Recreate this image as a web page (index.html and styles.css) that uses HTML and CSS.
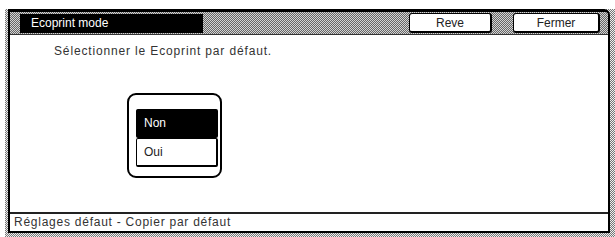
FILE: index.html
```html
<!DOCTYPE html>
<html>
<head>
  <meta charset="UTF-8">
  <title>Ecoprint mode</title>
  <link rel="stylesheet" href="styles.css">
</head>
<body>
  <div class="frame">
    <div class="screen">
      <div class="titlebar">
        <div class="title">Ecoprint mode</div>
        <div class="spacer"></div>
        <button class="tbtn">Reve</button>
        <button class="tbtn">Fermer</button>
      </div>

      <div class="content">
        <p class="prompt">Sélectionner le Ecoprint par défaut.</p>
        <div class="choice-group">
          <button class="choice selected">Non</button>
          <button class="choice">Oui</button>
        </div>
      </div>

      <div class="status">Réglages défaut - Copier par défaut</div>
    </div>
  </div>
</body>
</html>
```

FILE: styles.css
```css
/* Panneau Ecoprint */
body {
  margin: 0;
  background-color: #fff;
  font-family: "Liberation Sans", Arial, sans-serif;
}

.frame {
  margin: 9px 0 0 5px;
  width: 610px;
  height: 228px;
  padding: 0 0 0 3px;
  box-sizing: border-box;
  background: repeating-conic-gradient(#777 0 25%, #eee 0 50%) 0 0 / 2px 2px;
}

.screen {
  width: 602px;
  height: 224px;
  box-sizing: border-box;
  border: 2px solid #000;
  border-top-width: 3px;
  border-radius: 0 6px 0 0;
  background-color: #fff;
  display: flex;
  flex-direction: column;
}

.titlebar {
  height: 23px;
  box-sizing: border-box;
  display: flex;
  align-items: center;
  padding: 0 8px 0 10px;
  border-bottom: 1px solid #333;
  border-radius: 0 4px 0 0;
  background: repeating-conic-gradient(#666 0 25%, #d4d4d4 0 50%) 0 0 / 2px 2px;
}

.title {
  width: 172px;
  height: 19px;
  line-height: 19px;
  padding-left: 11px;
  background-color: #000;
  color: #fff;
  font-size: 12px;
}

.spacer {
  flex: 1;
}

.tbtn {
  height: 20px;
  padding: 0;
  margin-left: 21px;
  width: 83px;
  background-color: #fff;
  border: 1px solid #000;
  border-right-width: 2px;
  border-bottom-width: 2px;
  border-radius: 3px;
  font-family: "Liberation Sans", Arial, sans-serif;
  font-size: 12px;
  color: #222;
}

.tbtn + .tbtn {
  width: 87px;
}

.content {
  flex: 1;
  padding: 9px 0 0 44px;
}

.prompt {
  margin: 0;
  font-size: 12px;
  line-height: 14px;
  letter-spacing: 0.85px;
  color: #333;
}

.choice-group {
  margin: 35px 0 0 73px;
  width: 95px;
  height: 85px;
  box-sizing: border-box;
  border: 2px solid #000;
  border-radius: 9px;
  padding: 14px 4px 0 7px;
}

.choice {
  display: block;
  width: 82px;
  height: 29px;
  padding: 0 0 0 7px;
  text-align: left;
  background-color: #fff;
  border: 1px solid #000;
  border-right-width: 2px;
  border-bottom-width: 2px;
  border-radius: 2px;
  font-family: "Liberation Sans", Arial, sans-serif;
  font-size: 12px;
  color: #222;
}

.choice.selected {
  background-color: #000;
  color: #fff;
}

.status {
  height: 17px;
  line-height: 17px;
  border-top: 2px solid #222;
  padding-left: 4px;
  font-size: 12px;
  letter-spacing: 0.75px;
  color: #333;
}
```
